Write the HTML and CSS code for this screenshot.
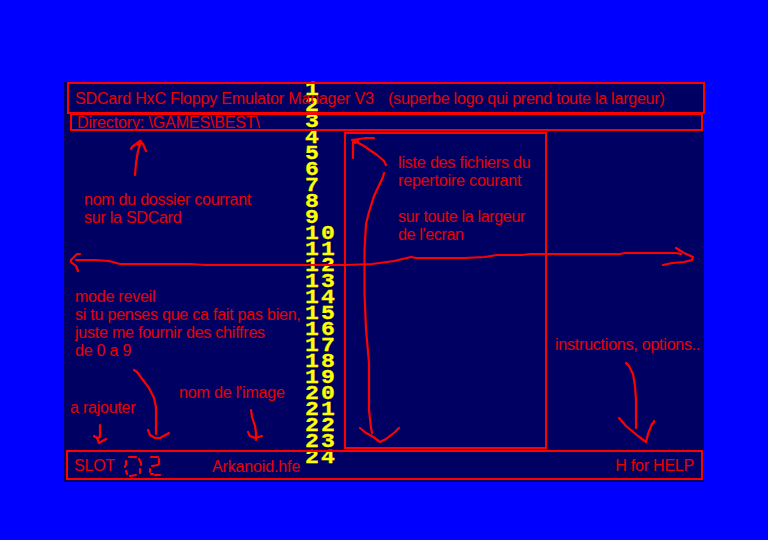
FILE: index.html
```html
<!DOCTYPE html>
<html lang="fr">
<head>
<meta charset="utf-8">
<title>SDCard HxC Floppy Emulator Manager</title>
<link rel="stylesheet" href="styles.css">
</head>
<body>
<main class="screen">
  <ol class="lines">
    <li>1</li><li>2</li><li>3</li><li>4</li><li>5</li><li>6</li><li>7</li><li>8</li>
    <li>9</li><li>10</li><li>11</li><li>12</li><li>13</li><li>14</li><li>15</li><li>16</li>
    <li>17</li><li>18</li><li>19</li><li>20</li><li>21</li><li>22</li><li>23</li><li>24</li>
  </ol>
  <div class="layout">
    <header class="box title"><span class="name">SDCard HxC Floppy Emulator Manager V3</span><span class="logo">(superbe logo qui prend toute la largeur)</span></header>
    <div class="box directory"><span>Directory: \GAMES\BEST\</span></div>
    <section class="box files">
      <p>liste des fichiers du<br>repertoire courant</p>
      <p class="wide">sur toute la largeur<br>de l'ecran</p>
    </section>
    <footer class="box status">
      <span class="slot">SLOT</span>
      <span class="image">Arkanoid.hfe</span>
      <span class="help">H for HELP</span>
    </footer>
  </div>
  <p class="note folder">nom du dossier courrant<br>sur la SDCard</p>
  <p class="note clock">mode reveil<br>si tu penses que ca fait pas bien,<br>juste me fournir des chiffres<br>de 0 a 9</p>
  <p class="note add">a rajouter</p>
  <p class="note img">nom de l'image</p>
  <p class="note opts">instructions, options..</p>
</main>
<svg class="ink" width="768" height="540" viewBox="0 0 768 540" aria-hidden="true">
  <path d="M135 175L136 163L138 151L141 141M131 149L132 147L140 141L143 144L146 151M138 145L140 143"/>
  <path d="M80 254L77 254L71 260L71 262L76 266L78 271M76 260H95L109 261L120 264L190 264L206 265H346L372 264L394 261L411 257L416 258H464L485 257L497 255H522L530 254H620L625 253H676L681 254M676 248L684 253L693 257L692 260L684 262L672 263L663 265"/>
  <path d="M386 165L384 161L377 155L364 146L353 140M352 140L366 138H374M353 141V158M355 143L358 141"/>
  <path d="M384 173L383 177L374 196L369 212L366 224L364.500 250V294L366 329L369 363V410L371 428L372 433M360 428L366 433L372 436L380 442L386 439L395 432L399 428"/>
  <path d="M134 370L137 372L149 388L154 398L156 407V434M148 430L150 435L155 438L160 438L169 433"/>
  <path d="M100 425V437L98 438M94 436L97 438L99 443L106 439"/>
  <path d="M251 410L252 417L255 426L256 433V440M248 432L250 436L255 438L262 436"/>
  <path d="M626 363L629 366L633 374L635 386L636 400V428M619 418L626 426L638 436L646 442L648 434L652 424L654 422V421"/>
  <path d="M129 457H136M126 461V465M125 466V467M139 459L141 463M141 464V465M140 469V473M126 471L127 474M130 476L136 475M151 457H158M159 459V464M152 466L158 465M150 469V472M151 474H153M155 475H160"/>
</svg>
</body>
</html>
```
FILE: styles.css
```css
* { box-sizing: border-box; }

body {
  margin: 0;
  width: 768px;
  height: 540px;
  overflow: hidden;
  padding: 82px 64px 58px;
  background: #0000ff;
  color: #e80000;
  font: 16px/18px "Liberation Sans", Arial, sans-serif;
  letter-spacing: -0.22px;
}

p { margin: 0; }

.screen {
  position: relative;
  width: 640px;
  height: 400px;
  background: #000062;
}

.lines {
  position: absolute;
  left: 241px;
  top: 0;
  margin: 0;
  padding: 0;
  list-style: none;
  color: #ffff00;
  font: bold 21px/16px "Liberation Mono", monospace;
  letter-spacing: 1.95px;
  -webkit-text-stroke: 0.3px #ffff00;
  transform: scaleX(1.1);
  transform-origin: left top;
}

.layout {
  position: relative;
  display: flex;
  flex-direction: column;
  height: 398px;
  margin: 0 -1px 0 2px;
}

.box { border: 2px solid #ff0000; white-space: nowrap; }

.title {
  display: flex;
  gap: 14px;
  height: 32px;
  margin-left: 1px;
  padding: 6px 0 0 6px;
}
.name { width: 299px; letter-spacing: -0.17px; }

.directory {
  height: 18px;
  margin: -1px 2px 0 4px;
  padding-left: 5px;
  line-height: 16px;
  letter-spacing: -0.13px;
}

.files {
  width: 203px;
  height: 317px;
  margin: 1px 0 0 278px;
  padding: 20px 0 0 52px;
  letter-spacing: -0.17px;
}
.files p + p { margin-top: 18px; }
.files .wide { letter-spacing: -0.32px; }

.status {
  display: flex;
  height: 30px;
  margin: 1px 2px 0 0;
  padding: 5px 7px 0 6px;
}
.slot { width: 138px; }
.image { padding-top: 1px; letter-spacing: -0.14px; }
.help { margin-left: auto; }

.note { position: absolute; white-space: nowrap; }
.folder { left: 20px; top: 109px; letter-spacing: -0.24px; }
.clock { left: 11px; top: 206px; }
.add { left: 6px; top: 317px; }
.img { left: 115px; top: 302px; letter-spacing: -0.16px; }
.opts { left: 491px; top: 254px; }

.ink {
  position: absolute;
  left: 0;
  top: 0;
  fill: none;
  stroke: #ff0000;
  stroke-width: 2.2;
  stroke-linecap: round;
  stroke-linejoin: round;
}
```
